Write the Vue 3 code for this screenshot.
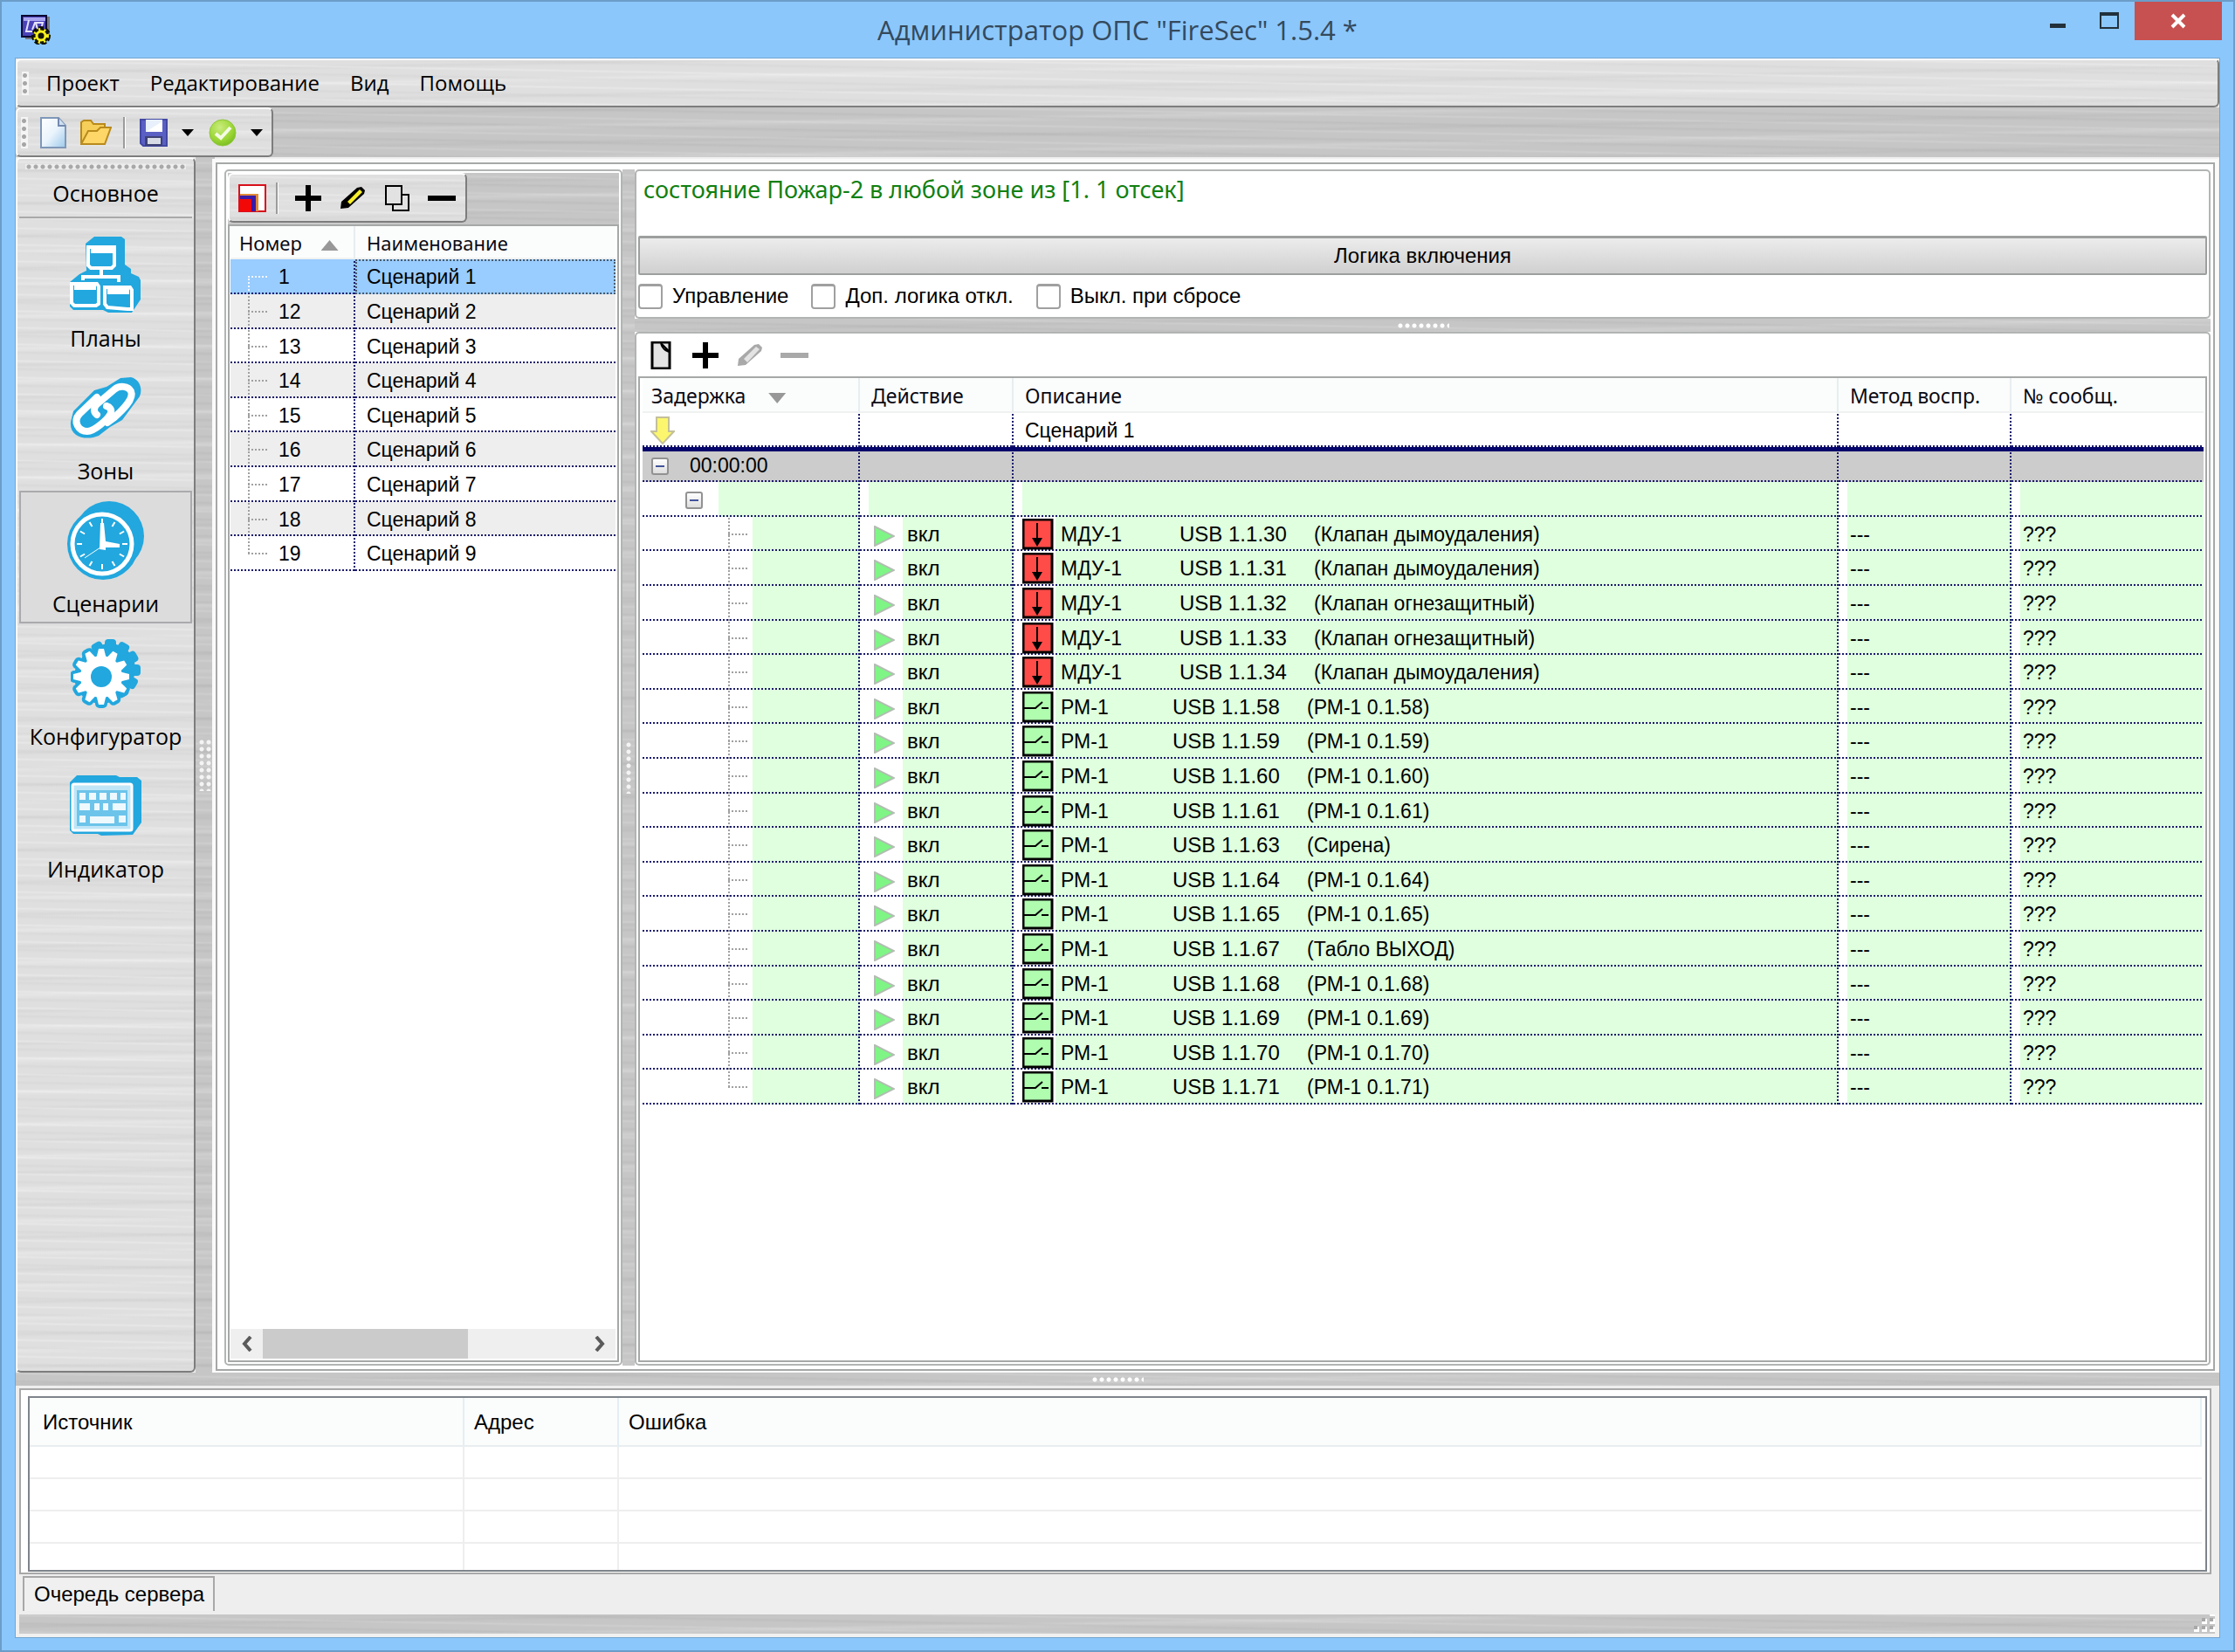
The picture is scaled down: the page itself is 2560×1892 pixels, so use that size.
<script setup>
import { ref } from 'vue'

const menu = ['Проект', 'Редактирование', 'Вид', 'Помощь']
const sections = [
  { id: 'plans', title: 'Планы' },
  { id: 'zones', title: 'Зоны' },
  { id: 'scenarios', title: 'Сценарии' },
  { id: 'config', title: 'Конфигуратор' },
  { id: 'indicator', title: 'Индикатор' },
]
const active = ref('scenarios')

const scenarios = [1, 12, 13, 14, 15, 16, 17, 18, 19].map((number, i) => ({
  number,
  name: `Сценарий ${i + 1}`,
}))
const selected = ref(1)

const options = ref([
  { id: 'opt-control', title: 'Управление', on: false },
  { id: 'opt-logic', title: 'Доп. логика откл.', on: false },
  { id: 'opt-reset', title: 'Выкл. при сбросе', on: false },
])

const smoke = 'Клапан дымоудаления'
const fire = 'Клапан огнезащитный'
const valve = (n, note) => ({ kind: 'valve', model: 'МДУ-1', address: `USB 1.1.${n}`, note: `(${note})` })
const relay = (n, note) => ({ kind: 'relay', model: 'РМ-1', address: `USB 1.1.${n}`, note: `(${note || 'РМ-1 0.1.' + n})` })
const devices = [
  valve(30, smoke), valve(31, smoke), valve(32, fire), valve(33, fire), valve(34, smoke),
  relay(58), relay(59), relay(60), relay(61), relay(63, 'Сирена'), relay(64), relay(65),
  relay(67, 'Табло ВЫХОД'), relay(68), relay(69), relay(70), relay(71),
]

const teeth = Array.from({ length: 12 }, (_, i) => i * 30)
const ticks = Array.from({ length: 12 }, (_, i) => i * 30)
</script>

<template>
  <div class="window">
    <header class="titlebar">
      <svg class="app-icon" viewBox="0 0 34 34" width="34" height="34" aria-hidden="true">
        <path d="M2 2h31v26H5" fill="#77797f" />
        <rect x="1" y="1" width="28" height="24" fill="#4a42b8" stroke="#0b0830" stroke-width="2" />
        <path d="M3 3h25v4H3z" fill="#a9a5f0" />
        <path d="M9 6 6 19h7M13 17l3-8h9l-2 7M17 9l2 8" fill="none" stroke="#e4e2ff" stroke-width="2" />
        <circle cx="23" cy="24" r="8" fill="none" stroke="#0d0d05" stroke-width="6" stroke-dasharray="5 2" />
        <circle cx="23" cy="24" r="9" fill="#15150a" />
        <circle cx="23" cy="24" r="7" fill="none" stroke="#f7f01c" stroke-width="4" stroke-dasharray="2 4" />
        <circle cx="23" cy="24" r="5" fill="none" stroke="#f7f01c" stroke-width="3" />
      </svg>
      <h1>Администратор ОПС "FireSec" 1.5.4 *</h1>
      <div class="window-controls">
        <button type="button" class="ctl" aria-label="Свернуть">
          <svg width="22" height="22" viewBox="0 0 22 22"><path d="M1 14h18v5H1z" fill="#22303a" /></svg>
        </button>
        <button type="button" class="ctl" aria-label="Развернуть">
          <svg width="22" height="22" viewBox="0 0 22 22"><path d="M1 2h20v17H1z" fill="none" stroke="#22303a" stroke-width="2" /><path d="M0 1h22v4H0z" fill="#22303a" /></svg>
        </button>
        <button type="button" class="ctl close" aria-label="Закрыть">
          <svg width="20" height="18" viewBox="0 0 20 18"><path d="M3 2l14 14M17 2L3 16" stroke="#fff" stroke-width="4" /></svg>
        </button>
      </div>
    </header>

    <div class="client">
      <nav class="menubar metal-light">
        <span class="grip-v three"></span>
        <button v-for="m in menu" :key="m" type="button">{{ m }}</button>
      </nav>

      <div class="toolrow">
        <div class="toolbar main-tools metal-light">
          <span class="grip-v four"></span>
          <button type="button" class="tool" aria-label="Новый">
            <svg width="30" height="36" viewBox="0 0 30 36"><defs><linearGradient id="pg" x1="0" y1="0" x2="1" y2="1"><stop offset="0" stop-color="#fff" /><stop offset=".5" stop-color="#eaf4fc" /><stop offset="1" stop-color="#9cc9ea" /></linearGradient></defs><path d="M1 1h20l8 9v25H1z" fill="url(#pg)" stroke="#7f97b8" stroke-width="2" /><path d="M21 1v9h8" fill="#cfe0f0" stroke="#7489b0" stroke-width="2" /></svg>
          </button>
          <button type="button" class="tool" aria-label="Открыть">
            <svg width="36" height="30" viewBox="0 0 36 30"><path d="M1 27V3l3-2h8l3 4h13v6" fill="#f6cf5a" stroke="#b98a1c" stroke-width="2" /><path d="M1 28 9 13h10l4-4h12l-7 19z" fill="#ffd768" stroke="#b98a1c" stroke-width="2" /></svg>
          </button>
          <span class="sep"></span>
          <button type="button" class="tool save" aria-label="Сохранить">
            <svg width="32" height="32" viewBox="0 0 32 32"><path d="M1 1h30v30H4l-3-3z" fill="#5a5fc4" stroke="#4248a4" stroke-width="2" /><path d="M7 1h19v14H7z" fill="#e8f0fb" /><path d="M7 15 26 3v12z" fill="#fff" /><path d="M6 20h20v11H6z" fill="#3d4275" /><path d="M9 22h15v7H9z" fill="#d7dbe6" /></svg>
          </button>
          <button type="button" class="drop" aria-label="Варианты сохранения"><svg width="14" height="8" viewBox="0 0 14 8"><path d="M0 0h14L7 8z" /></svg></button>
          <button type="button" class="tool" aria-label="Проверить">
            <svg width="32" height="34" viewBox="0 0 32 34"><defs><radialGradient id="ok" cx=".4" cy=".3" r=".8"><stop offset="0" stop-color="#c9ec7c" /><stop offset=".6" stop-color="#9bd636" /><stop offset="1" stop-color="#6fb51a" /></radialGradient></defs><circle cx="16" cy="17" r="15" fill="url(#ok)" stroke="#8fc63d" /><path d="M8 18l6 5 11-12" fill="none" stroke="#f4fbe4" stroke-width="4" /></svg>
          </button>
          <button type="button" class="drop" aria-label="Варианты проверки"><svg width="14" height="8" viewBox="0 0 14 8"><path d="M0 0h14L7 8z" /></svg></button>
        </div>
      </div>

      <div class="middle">
        <aside class="sidebar metal-light">
          <span class="grip-h wide"></span>
          <h2>Основное</h2>
          <button
            v-for="s in sections"
            :key="s.id"
            type="button"
            class="section"
            :class="{ active: active === s.id }"
            @click="active = s.id"
          >
            <svg v-if="s.id === 'plans'" width="82" height="88" viewBox="0 0 82 88">
              <path d="M18 8 28 0h31l4 3v29l7 5v5l9 4 2 4v22l-8 12-2 3H44l-6-3H4l-4-4V52l11-9 8-4z" fill="#22a7de" />
              <path d="M21 12h30v21l-3 3H24l-3-3zM2 54h29l2 3v20l-3 2H5l-3-3zM40 58h29l2 3v22h-5l-23-2-3-4z" fill="none" stroke="#fff" stroke-width="4" />
              <path d="M24 12h25v7H24zM5 55h25v6H5zM43 60h25v6H43z" fill="#fff" />
              <path d="M36 37v8M15 50v-4h41v6" fill="none" stroke="#fff" stroke-width="4" />
            </svg>
            <svg v-else-if="s.id === 'zones'" width="82" height="72" viewBox="0 0 82 72">
              <path d="M4 40 28 16l14-4L58 2l12-1c9 2 14 12 10 22L60 50l-14 8-13 10c-14 6-34 2-32-16z" fill="#22a7de" />
              <g fill="none" stroke="#fff" stroke-width="8" stroke-linecap="round">
                <path d="M31 24 11 43c-8 9-1 20 9 20 8 0 24-14 27-21 1-4-1-7-5-8" />
                <path d="M31 44c-4-3-4-8 0-12l20-17c6-5 16-4 19 2 4 9-10 22-20 31l-7 5" />
              </g>
            </svg>
            <svg v-else-if="s.id === 'scenarios'" width="88" height="90" viewBox="0 0 88 90">
              <circle cx="48" cy="40" r="40" fill="#22a7de" />
              <circle cx="41" cy="49" r="41" fill="#22a7de" />
              <circle cx="40" cy="49" r="34" fill="#22a7de" stroke="#fff" stroke-width="5" />
              <g stroke="#fff" stroke-width="2"><path v-for="a in ticks" :key="a" d="M40 20v6" :transform="`rotate(${a} 40 49)`" /></g>
              <path d="M37 55l1-30h4l2 21 16 3v4H44v3z" fill="#fff" />
              <path d="M38 53 20 65" stroke="#fff" stroke-width="1" />
            </svg>
            <svg v-else-if="s.id === 'config'" width="80" height="80" viewBox="0 0 80 80">
              <g fill="#22a7de">
                <circle cx="45" cy="35" r="29" /><rect v-for="a in teeth" :key="'b' + a" x="39" y="1" width="13" height="18" rx="4" :transform="`rotate(${a} 45 36)`" />
                <circle cx="35" cy="44" r="31" /><rect v-for="a in teeth" :key="'c' + a" x="28" y="8" width="14" height="18" rx="5" :transform="`rotate(${a} 35 44)`" />
              </g>
              <g fill="#fff"><circle cx="35" cy="44" r="24" /><path v-for="a in teeth" :key="a" d="M29 24l3-12h6l3 12z" :transform="`rotate(${a} 35 44)`" /></g>
              <circle cx="35" cy="44" r="12" fill="#22a7de" />
            </svg>
            <svg v-else width="82" height="70" viewBox="0 0 82 70">
              <path d="M0 8 8 0h45l4 2h20l5 4v48L72 68l-36 1-4-2H4l-4-4z" fill="#22a7de" />
              <rect x="3" y="10" width="68" height="53" rx="2" fill="#bfe6f7" stroke="#fff" stroke-width="3" />
              <rect x="8" y="17" width="58" height="41" fill="#6cc4ea" />
              <path d="M11 24h7M22 24h8M34 24h8M46 24h8M58 24h6M11 36h12M28 36h6M38 36h6M49 36h15M11 50h7M23 51h28M56 50h8" stroke="#eef9fe" stroke-width="8" />
            </svg>
            <span>{{ s.title }}</span>
          </button>
        </aside>

        <div class="split-v metal-dark"><span class="grip-block tall"></span></div>

        <main class="workspace">
          <section class="pane list-pane">
            <div class="metal-dark pane-tools">
              <div class="toolbar small metal-light">
                <button type="button" class="tool51" aria-label="Сценарий">
                  <svg width="32" height="32" viewBox="0 0 32 32"><path d="M1 1h30v30H1z" fill="#fff" stroke="#d8101c" stroke-width="2" /><path d="M2 11h21v20H2z" fill="#e08a3c" /><path d="M2 13h18v18H2z" fill="#3a1aa8" /><path d="M2 17h13v14H2z" fill="#f30808" /></svg>
                </button>
                <span class="sep"></span>
                <button type="button" class="tool51" aria-label="Добавить"><svg width="32" height="32" viewBox="0 0 32 32"><path d="M13 1h6v12h12v6H19v12h-6V19H1v-6h12z" /></svg></button>
                <button type="button" class="tool51" aria-label="Изменить"><svg width="30" height="28" viewBox="0 0 30 28"><path d="M1 26l1-8L20 2l5-1 4 4-1 4L10 25z" fill="#000" /><path d="M9 18 23 4l3 3-14 14z" fill="#f6ee2a" /></svg></button>
                <button type="button" class="tool51" aria-label="Копировать"><svg width="28" height="30" viewBox="0 0 28 30"><path d="M9 11h18v18H9z" fill="#e2e2e2" stroke="#000" stroke-width="2" /><path d="M1 1h18v21H1z" fill="#e2e2e2" stroke="#000" stroke-width="2" /></svg></button>
                <button type="button" class="tool51" aria-label="Удалить"><svg width="32" height="32" viewBox="0 0 32 32"><path d="M0 13h32v6H0z" /></svg></button>
              </div>
            </div>
            <div class="grid-frame">
              <table class="grid scen">
                <thead>
                  <tr><th class="c-num">Номер <i class="sort up"></i></th><th>Наименование</th></tr>
                </thead>
                <tbody>
                  <tr v-for="s in scenarios" :key="s.number" :class="{ sel: selected === s.number }" @click="selected = s.number">
                    <td class="num">{{ s.number }}</td>
                    <td class="name">{{ s.name }}</td>
                  </tr>
                </tbody>
              </table>
              <div class="scroll">
                <button type="button" aria-label="Влево"><svg width="14" height="18" viewBox="0 0 14 18"><path d="M11 1 4 9l7 8" /></svg></button>
                <div class="track"><div class="thumb"></div></div>
                <button type="button" aria-label="Вправо"><svg width="14" height="18" viewBox="0 0 14 18"><path d="M3 1l7 8-7 8" /></svg></button>
              </div>
            </div>
          </section>

          <div class="split-v narrow metal-dark"><span class="grip-block thin"></span></div>

          <div class="details">
            <section class="pane logic">
              <p class="condition">состояние Пожар-2 в любой зоне из [1. 1 отсек]</p>
              <button type="button" class="logic-button">Логика включения</button>
              <div class="options">
                <label v-for="o in options" :key="o.id" :for="o.id"><input :id="o.id" v-model="o.on" type="checkbox" />{{ o.title }}</label>
              </div>
            </section>

            <div class="split-h metal-dark"><span class="grip-h"></span></div>

            <section class="pane actions">
              <div class="action-tools">
                <button type="button" class="tool51" aria-label="Новый"><svg width="24" height="32" viewBox="0 0 24 32"><path d="M2 1h20v30H2z" fill="#e4e4e4" stroke="#000" stroke-width="3" /><path d="M12 2c1 5 5 9 10 10M12 2l10 10" fill="none" stroke="#000" stroke-width="2" /></svg></button>
                <button type="button" class="tool51" aria-label="Добавить"><svg width="32" height="32" viewBox="0 0 32 32"><path d="M13 1h6v12h12v6H19v12h-6V19H1v-6h12z" /></svg></button>
                <button type="button" class="tool51" aria-label="Изменить" disabled><svg width="30" height="28" viewBox="0 0 30 28"><path d="M1 26l1-8L20 2l5-1 4 4-1 4L10 25z" fill="#a9a9a9" /><path d="M8 18 22 4l4 3-14 15z" fill="#e3e3e3" /></svg></button>
                <button type="button" class="tool51" aria-label="Удалить" disabled><svg width="32" height="32" viewBox="0 0 32 32"><path d="M0 13h32v6H0z" fill="#a9a9a9" /></svg></button>
              </div>
              <div class="grid-frame">
                <table class="grid acts">
                  <thead>
                    <tr>
                      <th class="c-delay">Задержка <i class="sort down"></i></th>
                      <th class="c-act">Действие</th>
                      <th>Описание</th>
                      <th class="c-method">Метод воспр.</th>
                      <th class="c-msg">№ сообщ.</th>
                    </tr>
                  </thead>
                  <tbody>
                    <tr class="root">
                      <td class="arrow-cell"><svg width="28" height="32" viewBox="0 0 28 32"><path d="M7 1h14v16h6L14 31 1 17h6z" fill="#fbf66e" stroke="#c4c09a" stroke-width="2" /></svg></td>
                      <td></td><td>Сценарий 1</td><td></td><td></td>
                    </tr>
                    <tr class="time">
                      <td><i class="node"></i>00:00:00</td><td></td><td></td><td></td><td></td>
                    </tr>
                    <tr class="group leafy">
                      <td><i class="node"></i></td><td></td><td></td><td></td><td></td>
                    </tr>
                  </tbody>
                  <tbody class="leaves">
                    <tr v-for="d in devices" :key="d.address" class="leaf leafy">
                      <td></td>
                      <td class="on"><svg width="24" height="24" viewBox="0 0 24 24"><path d="M1 1v22l22-11z" fill="#7ef585" stroke="#b3bdb3" stroke-width="2" /></svg>вкл</td>
                      <td class="device">
                        <div :class="d.kind">
                          <svg v-if="d.kind === 'valve'" width="36" height="36" viewBox="0 0 36 36"><path d="M1 1h33v33H1z" fill="#ff4c48" stroke="#000" stroke-width="3" /><path d="M17 5v20" stroke="#000" stroke-width="2" /><path d="M11 22h12l-6 10z" /></svg>
                          <svg v-else width="36" height="36" viewBox="0 0 36 36"><path d="M1 1h33v33H1z" fill="#b0fdb0" stroke="#000" stroke-width="3" /><path d="M2 19h13l8-7M22 19h8" fill="none" stroke="#000" stroke-width="2" /></svg>
                          <span class="model">{{ d.model }}</span><span class="address">{{ d.address }}</span><span>{{ d.note }}</span>
                        </div>
                      </td>
                      <td>---</td>
                      <td>???</td>
                    </tr>
                  </tbody>
                </table>
              </div>
            </section>
          </div>
        </main>
      </div>

      <div class="split-h metal-dark"><span class="grip-h"></span></div>

      <section class="queue">
        <div class="queue-frame">
          <table class="errors">
            <thead><tr><th class="c-src">Источник</th><th class="c-adr">Адрес</th><th>Ошибка</th></tr></thead>
            <tbody><tr v-for="n in 4" :key="n"><td></td><td></td><td></td></tr></tbody>
          </table>
        </div>
        <button type="button" class="tab">Очередь сервера</button>
      </section>

      <footer class="status metal-dark">
        <svg width="24" height="20" viewBox="0 0 24 20"><path d="M18 0h6v2h-6zM9 5h6v6H9zM18 5h6v6h-6zM0 14h6v6H0zM9 14h6v6H9zM18 14h6v6h-6z" fill="#fff" /><path d="M9 4h4v4H9zM18 4h4v4h-4zM0 13h4v4H0zM9 13h4v4H9zM18 13h4v4h-4z" fill="#a8a8a8" /></svg>
      </footer>
    </div>
  </div>
</template>

<style>
html,
body {
  margin: 0;
  background: #8cc7fb;
}
</style>

<style scoped>
* {
  box-sizing: border-box;
}
button {
  font: inherit;
  color: inherit;
  background: none;
  border: 0;
  padding: 0;
  margin: 0;
}
svg {
  display: block;
}
.window {
  display: flex;
  flex-direction: column;
  min-height: 100vh;
  padding: 0 15px 14px;
  border: 2px solid #6b9dc9;
  background: #8cc7fb;
  color: #000;
  font-family: 'Liberation Sans', sans-serif;
  font-size: 24px;
}

/* Brushed metal */
.metal-light {
  background:
    repeating-linear-gradient(181deg, transparent 0 5px, rgba(255, 255, 255, 0.25) 7px, transparent 9px 14px, rgba(170, 170, 170, 0.1) 16px, transparent 19px),
    repeating-linear-gradient(179deg, transparent 0 11px, rgba(160, 160, 160, 0.1) 14px, transparent 17px 29px, rgba(255, 255, 255, 0.22) 32px, transparent 37px),
    #dfdfdf;
}
.metal-dark,
.toolrow {
  background:
    repeating-linear-gradient(181deg, transparent 0 5px, rgba(255, 255, 255, 0.14) 7px, transparent 9px 14px, rgba(140, 140, 140, 0.12) 16px, transparent 19px),
    repeating-linear-gradient(179deg, transparent 0 11px, rgba(140, 140, 140, 0.1) 14px, transparent 17px 29px, rgba(255, 255, 255, 0.16) 32px, transparent 37px),
    #c6c6c6;
}

/* Title bar */
.titlebar {
  display: grid;
  grid-template-columns: 1fr auto 1fr;
  height: 64px;
}
.app-icon {
  margin: 15px 0 0 7px;
}
h1 {
  margin: 0;
  padding-top: 10px;
  font: 400 31px/44px 'Open Sans', sans-serif;
  color: #34495c;
}
.window-controls {
  display: flex;
  justify-content: flex-end;
  margin-right: -2px;
}
.ctl {
  display: grid;
  place-items: center;
  width: 58px;
  height: 44px;
}
.ctl.close {
  width: 100px;
  background: #c75050;
}

.client {
  flex: 1;
  display: flex;
  flex-direction: column;
  border: 1px solid #76a5cf;
  padding-bottom: 4px;
  background: #f0f0f0;
}

/* Menu and main toolbar */
.menubar {
  display: flex;
  align-items: center;
  gap: 35px;
  height: 56px;
  padding-left: 5px;
  border: 2px solid #fff;
  border-right-color: #7d7d7d;
  border-bottom-color: #7d7d7d;
  border-radius: 6px;
  font: 24px/36px 'Open Sans', sans-serif;
}
.menubar .grip-v {
  margin-right: -15px;
}
.toolrow {
  display: flex;
  height: 57px;
}
.toolbar {
  display: flex;
  align-items: center;
  border: 2px solid #fff;
  border-right-color: #7d7d7d;
  border-bottom-color: #7d7d7d;
  border-radius: 6px;
}
.main-tools {
  padding: 0 2px 0 4px;
}
.main-tools .grip-v {
  margin-right: 4px;
}
.main-tools .sep {
  margin: 0 7px;
}
.tool {
  display: grid;
  place-items: center;
  width: 49px;
  height: 44px;
}
.grip-v {
  width: 8px;
  background:
    radial-gradient(circle, #a6a6a6 2px, transparent 3px) 0 0 / 7px 9px repeat-y,
    #f4f4f4;
}
.three {
  height: 27px;
}
.four {
  height: 36px;
}
.sep {
  width: 3px;
  height: 36px;
  border-left: 2px solid #9b9b9b;
  background: #fff;
}
.drop {
  display: grid;
  place-items: center;
  width: 30px;
  height: 44px;
}

/* Section sidebar */
.middle {
  flex: 1;
  display: flex;
}
.sidebar {
  display: flex;
  flex-direction: column;
  width: 206px;
  padding: 6px 2px 0;
  border: 2px solid #fff;
  border-right-color: #7d7d7d;
  border-bottom-color: #7d7d7d;
  border-radius: 6px;
  font: 25px/36px 'Open Sans', sans-serif;
}
.grip-h {
  width: 60px;
  height: 6px;
  background: radial-gradient(circle, #fff 2px, transparent 3px) 0 0 / 8px 6px;
}
.grip-h.wide {
  align-self: center;
  width: 184px;
  background-image: radial-gradient(circle, #a8a8a8 2px, #eee 3px);
}
h2 {
  margin: 0 0 8px;
  padding: 9px 0;
  border-bottom: 2px solid #a9a9a9;
  font: inherit;
  text-align: center;
}
.section {
  display: flex;
  flex-direction: column;
  align-items: center;
  height: 152px;
  padding-bottom: 3px;
  border: 2px solid transparent;
}
.section svg {
  margin: auto;
}
.section.active {
  background: #dcdcdc;
  border-color: #aaaaae;
}

/* Splitters */
.split-v {
  display: grid;
  place-items: center;
  width: 22px;
}
.split-v.narrow {
  width: 14px;
}
.split-h {
  display: grid;
  place-items: center;
  height: 15px;
}
.grip-block {
  height: 60px;
  background: radial-gradient(circle, #f4f4f4 2px, transparent 3px) 0 0 / 8px 8px;
}
.tall {
  width: 16px;
}
.thin {
  width: 8px;
}

/* Work area */
.workspace {
  flex: 1;
  display: flex;
  min-width: 0;
  padding: 6px 3px 4px 8px;
  border: 2px solid #a6a8a8;
  margin: 6px 5px 2px 1px;
  background: #fff;
  outline: 4px solid #fafafa;
  outline-offset: 0;
}
.pane {
  display: flex;
  flex-direction: column;
  border: 2px solid #b2b4b4;
  border-radius: 5px;
  background: #fff;
}
.list-pane {
  width: 456px;
  padding: 2px;
}
.pane-tools {
  display: flex;
  height: 59px;
  padding-bottom: 2px;
}
.toolbar.small {
  padding: 0 2px 0 0;
}
.toolbar.small .sep {
  margin: 0 8px 0 2px;
}
.tool51 {
  display: grid;
  place-items: center;
  width: 51px;
  height: 44px;
}
.grid-frame {
  flex: 1;
  display: flex;
  flex-direction: column;
  border: 2px solid #a6a8a8;
  padding: 0 2px 2px 1px;
  background: #fff;
}
.actions .grid-frame {
  padding-left: 3px;
}

/* Data grids */
table {
  width: 100%;
  border-spacing: 0;
  table-layout: fixed;
}
.grid th {
  height: 38px;
  padding: 2px 13px 0;
  border-right: 2px solid #e8eef0;
  border-bottom: 2px solid #f0f2f2;
  background: #fbfcfc;
  color: #0a0a14;
  font: 400 22px/30px 'Noto Sans', sans-serif;
  text-align: left;
  white-space: nowrap;
}
.acts thead th {
  height: 40px;
  font-size: 23px;
}
.grid th:first-child {
  padding-left: 10px;
}
.grid th:last-child {
  border-right: 0;
}
.sort {
  display: inline-block;
  width: 20px;
  height: 12px;
  margin-left: 16px;
  background: #989898;
}
.acts .sort {
  margin-left: 20px;
}
.sort.up {
  clip-path: polygon(50% 0, 100% 100%, 0 100%);
}
.sort.down {
  clip-path: polygon(0 0, 100% 0, 50% 100%);
}
.grid td {
  --fill: transparent;
  --inset: 0px;
  --dot: #1b1b6c;
  height: 40px;
  padding: 0 13px;
  font-size: 23px;
  line-height: 28px;
  white-space: nowrap;
  background:
    repeating-linear-gradient(90deg, var(--dot) 0 2px, transparent 2px 4px) 0 100% / 100% 2px no-repeat,
    repeating-linear-gradient(0deg, var(--dot) 0 2px, transparent 2px 4px) 100% 0 / 2px 100% no-repeat,
    linear-gradient(var(--fill), var(--fill)) var(--inset) 0 / 100% 100% no-repeat;
}
.grid td:last-child {
  background:
    repeating-linear-gradient(90deg, var(--dot) 0 2px, transparent 2px 4px) 0 100% / 100% 2px no-repeat,
    linear-gradient(var(--fill), var(--fill)) var(--inset) 0 / 100% 100% no-repeat;
}

/* Scenario list */
.scen tr:nth-child(5n) td,
.scen tr:nth-child(5n + 3) td,
.leaves tr:nth-child(5n + 1) td,
.leaves tr:nth-child(5n + 4) td {
  height: 39px;
}
.c-num {
  width: 143px;
}
.scen tr:nth-child(even) td {
  --fill: #eeeeee;
}
.scen tr.sel td {
  --fill: #99ccff;
}
.scen .num {
  --tree: #a0a0a0;
  --stem: 100%;
  padding-left: 55px;
  background:
    repeating-linear-gradient(90deg, var(--dot) 0 2px, transparent 2px 4px) 0 100% / 100% 2px no-repeat,
    repeating-linear-gradient(0deg, var(--dot) 0 2px, transparent 2px 4px) 100% 0 / 2px 100% no-repeat,
    repeating-linear-gradient(0deg, var(--tree) 0 2px, transparent 2px 4px) 20px 0 / 2px var(--stem) no-repeat,
    repeating-linear-gradient(90deg, var(--tree) 0 2px, transparent 2px 4px) 20px 50% / 22px 2px no-repeat,
    linear-gradient(var(--fill), var(--fill)) 0 0 / 100% 100% no-repeat;
}
.scen tr:last-child .num {
  --stem: 50%;
}
.scen .sel .num {
  --tree: #f2f6fa;
  background-position: 0 100%, 100% 0, 20px 20px, 20px 50%, 0 0;
}
.scen .sel .name {
  outline: 2px dotted #4a5a6a;
  outline-offset: -2px;
}
.scroll {
  display: flex;
  align-items: center;
  height: 34px;
  margin-top: auto;
  background: #efefef;
}
.scroll button {
  display: grid;
  place-items: center;
  width: 37px;
  height: 34px;
}
.scroll path {
  fill: none;
  stroke: #5a5a5a;
  stroke-width: 4;
}
.track {
  flex: 1;
}
.thumb {
  width: 64%;
  height: 34px;
  background: #cbcbcb;
}

/* Logic pane */
.details {
  flex: 1;
  display: flex;
  flex-direction: column;
  min-width: 0;
}
.logic {
  height: 171px;
  padding: 2px 2px 0;
}
.condition {
  margin: 0;
  padding: 2px 6px 0;
  height: 72px;
  color: #118011;
  font: 27px/34px 'Noto Sans', sans-serif;
}
.logic-button {
  height: 45px;
  border: 2px solid #9d9f9f;
  border-top-width: 3px;
  border-radius: 2px;
  background: linear-gradient(#ececec, #d0d0d0);
}
.options {
  display: flex;
  gap: 26px;
  padding-top: 9px;
}
.options label {
  display: flex;
  align-items: center;
  gap: 11px;
  line-height: 30px;
}
.options input {
  appearance: none;
  width: 28px;
  height: 29px;
  margin: 0;
  border: 2px solid #a0a0a0;
  border-top-width: 3px;
  border-radius: 4px;
  background: #fff;
}
.options input:checked {
  background: #5a5a5a;
}

/* Actions pane */
.actions {
  flex: 1;
  padding: 0 2px 2px;
}
.action-tools {
  display: flex;
  height: 49px;
  padding-top: 3px;
}
.c-delay {
  width: 249px;
}
.c-act {
  width: 176px;
}
.c-method {
  width: 198px;
}
.c-msg {
  width: 220px;
}
.acts .root td {
  height: 39px;
}
.arrow-cell svg {
  margin-left: -4px;
}
.grid .time td {
  --fill: #cccccc;
  height: 40px;
  padding-bottom: 3px;
  border-top: 5px solid #04046a;
}
.grid .time td:first-child {
  padding-left: 10px;
}
.grid .group td:first-child {
  padding-left: 49px;
}
.node {
  display: inline-block;
  width: 20px;
  height: 20px;
  margin-right: 24px;
  border: 2px solid #929292;
  border-radius: 3px;
  vertical-align: -3px;
  background: linear-gradient(#44549a, #44549a) 50% 50% / 10px 2px no-repeat, linear-gradient(#fff, #dedede);
}
.leafy td {
  --fill: #dfffdf;
  --inset: 10px;
}
.group td:first-child {
  --inset: 87px;
}
.leaf td:first-child {
  --stem: 100%;
  background:
    repeating-linear-gradient(90deg, var(--dot) 0 2px, transparent 2px 4px) 0 100% / 100% 2px no-repeat,
    repeating-linear-gradient(0deg, var(--dot) 0 2px, transparent 2px 4px) 100% 0 / 2px 100% no-repeat,
    repeating-linear-gradient(0deg, #a0a0a0 0 2px, transparent 2px 4px) 98px 0 / 2px var(--stem) no-repeat,
    repeating-linear-gradient(90deg, #a0a0a0 0 2px, transparent 2px 4px) 98px 50% / 22px 2px no-repeat,
    linear-gradient(var(--fill), var(--fill)) 126px 0 / 100% 100% no-repeat;
}
.leaf:last-child td:first-child {
  --stem: 50%;
}
.leaf .on {
  --inset: 49px;
  font-size: 24px;
}
.on svg {
  display: inline-block;
  margin: 0 14px 0 3px;
  vertical-align: -6px;
}
.leaf .device {
  --inset: 48px;
  padding: 0 0 0 10px;
}
.device div {
  display: flex;
  align-items: center;
  height: 36px;
}
.device svg {
  margin-right: 8px;
}
.model {
  width: 128px;
}
.valve .model {
  width: 136px;
}
.address {
  width: 154px;
  font-size: 24px;
}

/* Server queue */
.queue {
  display: flex;
  flex-direction: column;
  align-items: flex-start;
  padding: 3px 9px 4px 4px;
  background: #eeeeee;
}
.queue-frame {
  align-self: stretch;
  padding: 7px 3px 1px 8px;
  border: 2px solid #a8a8a8;
  background: #fff;
}
.errors {
  border: 2px solid #7f848b;
  padding: 0 4px 0 0;
}
.errors th {
  height: 56px;
  padding: 2px 11px 0;
  border-right: 2px solid #e3eff4;
  border-bottom: 2px solid #e9edf0;
  background: #fbfcfc;
  font-weight: 400;
  text-align: left;
}
.errors th:first-child {
  padding-left: 15px;
}
.errors td {
  height: 37px;
  padding: 0;
  border-right: 2px solid #eeeeee;
  border-bottom: 2px solid #eeeeee;
}
.errors td:last-child {
  border-right: 0;
}
.errors tr:last-child td {
  height: 30px;
  border-bottom: 0;
}
.c-src {
  width: 498px;
}
.c-adr {
  width: 177px;
}
.tab {
  margin: 2px 0 0 4px;
  height: 40px;
  padding: 0 10px 0 11px;
  border: 2px solid #a8a8a8;
  border-bottom: 0;
  background: #f0f0f0;
}
.status {
  display: flex;
  justify-content: flex-end;
  height: 22px;
  margin: 0 5px 0 4px;
}
</style>
